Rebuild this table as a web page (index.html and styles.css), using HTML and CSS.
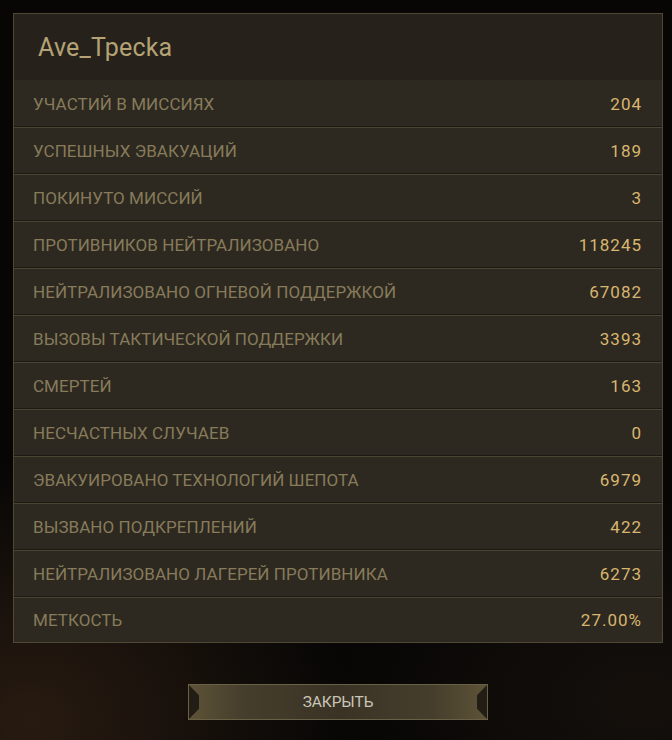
FILE: index.html
```html
<!DOCTYPE html>
<html lang="ru">
<head>
<meta charset="utf-8">
<title>Ave_Трecka</title>
<link rel="stylesheet" href="styles.css">
</head>
<body>
<div class="page">
  <section class="panel">
    <header class="panel-head">Ave_Трecka</header>
    <div class="rows">
      <div class="row"><span class="label">УЧАСТИЙ В МИССИЯХ</span><span class="value">204</span></div>
      <div class="row"><span class="label">УСПЕШНЫХ ЭВАКУАЦИЙ</span><span class="value">189</span></div>
      <div class="row"><span class="label">ПОКИНУТО МИССИЙ</span><span class="value">3</span></div>
      <div class="row"><span class="label">ПРОТИВНИКОВ НЕЙТРАЛИЗОВАНО</span><span class="value">118245</span></div>
      <div class="row"><span class="label">НЕЙТРАЛИЗОВАНО ОГНЕВОЙ ПОДДЕРЖКОЙ</span><span class="value">67082</span></div>
      <div class="row"><span class="label">ВЫЗОВЫ ТАКТИЧЕСКОЙ ПОДДЕРЖКИ</span><span class="value">3393</span></div>
      <div class="row"><span class="label">СМЕРТЕЙ</span><span class="value">163</span></div>
      <div class="row"><span class="label">НЕСЧАСТНЫХ СЛУЧАЕВ</span><span class="value">0</span></div>
      <div class="row"><span class="label">ЭВАКУИРОВАНО ТЕХНОЛОГИЙ ШЕПОТА</span><span class="value">6979</span></div>
      <div class="row"><span class="label">ВЫЗВАНО ПОДКРЕПЛЕНИЙ</span><span class="value">422</span></div>
      <div class="row"><span class="label">НЕЙТРАЛИЗОВАНО ЛАГЕРЕЙ ПРОТИВНИКА</span><span class="value">6273</span></div>
      <div class="row"><span class="label">МЕТКОСТЬ</span><span class="value">27.00%</span></div>
    </div>
  </section>
  <div class="actions">
    <button class="close-btn" type="button">ЗАКРЫТЬ</button>
  </div>
</div>
</body>
</html>
```

FILE: styles.css
```css
html, body {
  margin: 0;
  padding: 0;
  height: 100%;
}
body {
  background:
    radial-gradient(ellipse 320px 260px at 30px 720px, rgba(48, 32, 20, 0.8), rgba(48, 32, 20, 0) 100%),
    radial-gradient(ellipse 300px 200px at 640px 700px, rgba(30, 22, 16, 0.6), rgba(30, 22, 16, 0) 100%),
    #070605;
  font-family: Roboto, "Liberation Sans", sans-serif;
  overflow: hidden;
}
.page {
  padding: 13px 9px 0 13px;
  width: 650px;
}
.panel {
  border: 1px solid #4f4834;
  background: #2d2920;
}
.panel-head {
  height: 66px;
  background: #26221b;
  color: #b5a275;
  font-size: 25px;
  display: flex;
  align-items: center;
  padding-left: 24px;
  letter-spacing: 0.2px;
}
.rows {
  display: flex;
  flex-direction: column;
}
.row {
  height: 46px;
  display: flex;
  align-items: center;
  justify-content: space-between;
  padding: 0 21px 0 19px;
  border-top: 1px solid #4a4431;
  box-shadow: 0 -1px 0 #1b1914;
  font-size: 17px;
}
.row:first-child {
  border-top: 0;
  box-shadow: none;
  height: 47px;
}
.row:last-child {
  height: 44px;
}
.label {
  color: #877b5b;
  letter-spacing: 0.05px;
}
.value {
  color: #d9b66f;
  letter-spacing: 1px;
  margin-right: -1px;
}
.actions {
  display: flex;
  justify-content: center;
  padding-top: 41px;
}
.close-btn {
  position: relative;
  width: 300px;
  height: 36px;
  border: 1px solid #6a6045;
  background: linear-gradient(90deg, #5d5338 0%, #463e2c 18%, #3a3325 50%, #463e2c 82%, #5d5338 100%);
  color: #c9c5b8;
  font-family: Roboto, "Liberation Sans", sans-serif;
  font-size: 15.5px;
  letter-spacing: -0.1px;
  padding: 0;
  cursor: pointer;
}
.close-btn::before,
.close-btn::after {
  content: "";
  position: absolute;
  top: 0;
  bottom: 0;
  width: 10px;
  background: #221e15;
}
.close-btn::before {
  left: 0;
  clip-path: polygon(0 0, 100% 30%, 100% 70%, 0 100%);
}
.close-btn::after {
  right: 0;
  clip-path: polygon(100% 0, 0 30%, 0 70%, 100% 100%);
}
```
